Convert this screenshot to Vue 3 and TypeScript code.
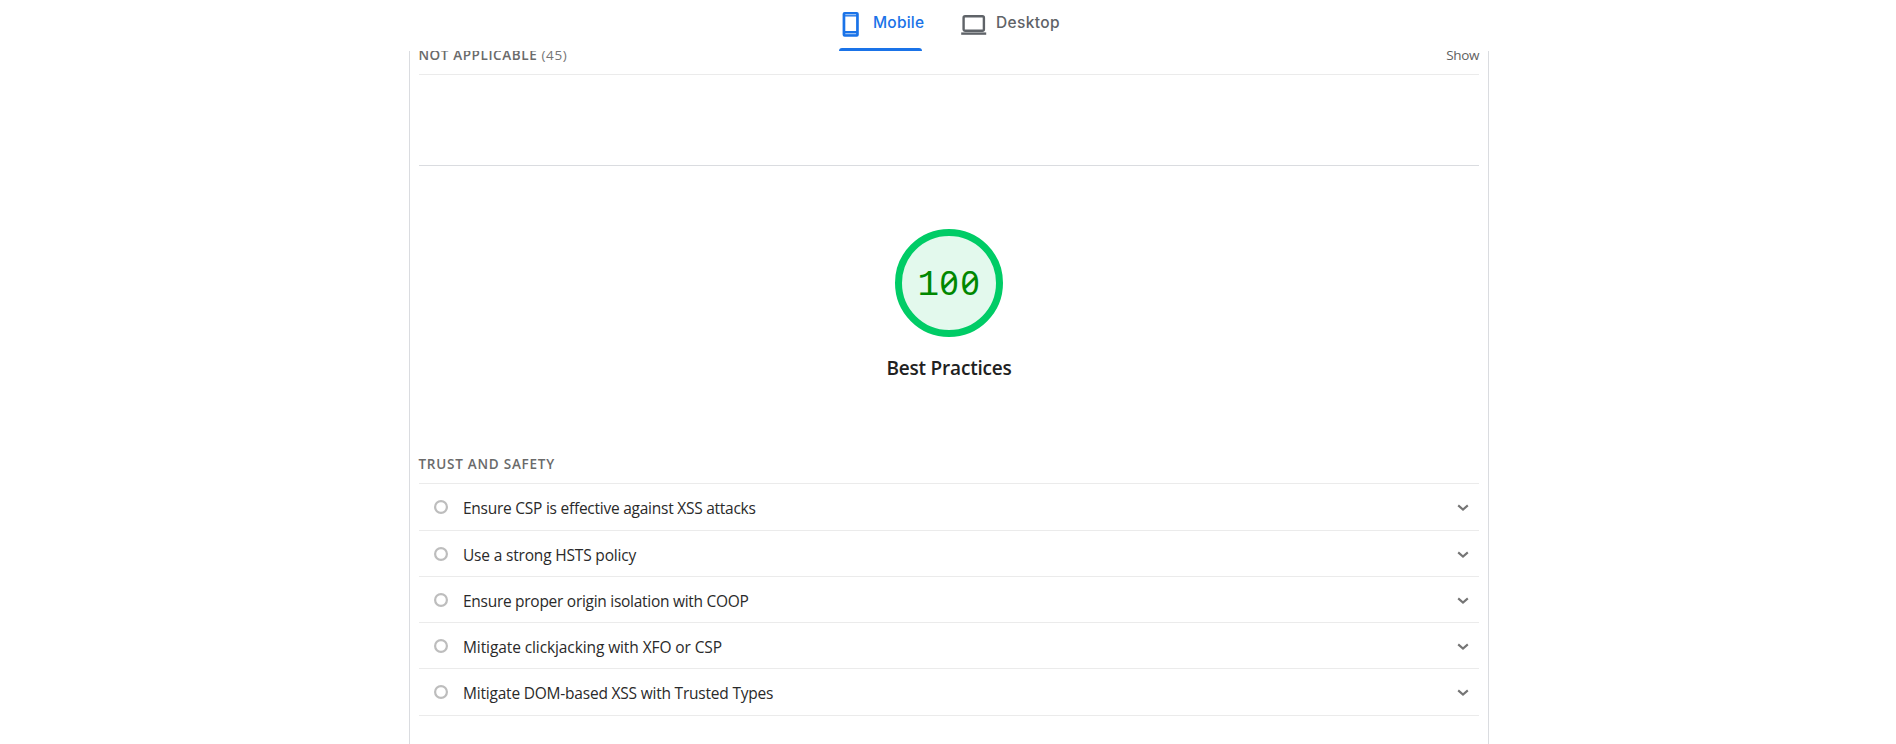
<script setup lang="ts">
interface Audit {
  title: string
}

const audits: Audit[] = [
  { title: 'Ensure CSP is effective against XSS attacks' },
  { title: 'Use a strong HSTS policy' },
  { title: 'Ensure proper origin isolation with COOP' },
  { title: 'Mitigate clickjacking with XFO or CSP' },
  { title: 'Mitigate DOM-based XSS with Trusted Types' },
]
</script>

<template>
  <div class="page">
    <nav class="tabs">
      <button class="tab active">
        <svg class="phone" width="24" height="26" viewBox="0 0 24 26">
          <path fill="currentColor" fill-rule="evenodd" d="M5.600 0h12.200a2 2 0 0 1 2 2v20.700a2 2 0 0 1-2 2H5.600a2 2 0 0 1-2-2V2a2 2 0 0 1 2-2zM6.300 4.600v14.400h10.800V4.600z" />
          <path stroke="#fff" stroke-opacity=".55" stroke-width="1.3" d="M6.300 2.700h10.800M6.300 21.700h10.800" />
        </svg>
        <span>Mobile</span>
      </button>
      <button class="tab desktop">
        <svg width="26" height="20" viewBox="0 0 26 20">
          <rect x="2.600" y="1.2" width="20.3" height="14.6" rx="1.5" fill="none" stroke="currentColor" stroke-width="2.4" />
          <path fill="currentColor" d="M.2 17.400h25v2.400H.2z" />
        </svg>
        <span>Desktop</span>
      </button>
    </nav>

    <main class="report">
      <header class="clump">
        <h3>NOT APPLICABLE <span class="count">(45)</span></h3>
        <span class="show">Show</span>
      </header>

      <section class="category">
        <div class="gauge">
          <span class="one">1</span><span class="zero">0</span><span class="zero">0</span>
        </div>
        <h2>Best Practices</h2>
      </section>

      <h3 class="group">TRUST AND SAFETY</h3>
      <ul class="audits">
        <li v-for="(audit, i) in audits" :key="audit.title" :class="['audit', `audit-${i + 1}`]">
          <svg class="dot" width="14" height="14" viewBox="0 0 14 14">
            <circle cx="7" cy="7" r="5.900" fill="none" stroke="#bdbdbd" stroke-width="2.200" />
          </svg>
          <span class="title">{{ audit.title }}</span>
          <svg class="chevron" width="12" height="8" viewBox="0 0 12 8">
            <path d="M1.2 1.4 6 5.600l4.800-4.200" fill="none" stroke="#757575" stroke-width="2.100" />
          </svg>
        </li>
      </ul>
    </main>
  </div>
</template>

<style>
body {
  background: #fff;
}
</style>

<style scoped>
.page {
  height: 744px;
  overflow: hidden;
  display: flex;
  flex-direction: column;
  box-sizing: border-box;
  padding-left: 409px;
  font-family: "Open Sans", "Noto Sans", sans-serif;
  color: #212121;
}

.tabs {
  width: 1080px;
  height: 51px;
  flex: none;
  display: flex;
  box-sizing: border-box;
  padding-left: 430px;
}

.tab {
  height: 51px;
  width: 83px;
  flex: none;
  display: flex;
  align-items: flex-start;
  box-sizing: border-box;
  padding: 0;
  border: 0;
  background: none;
  color: #5f6368;
  font: 500 15.5px/24px Inter, sans-serif;
  white-space: nowrap;
}

.tab span {
  margin-top: 11px;
  letter-spacing: 0.2px;
}

.tab.active {
  color: #1a73e8;
}

.tab.active::after {
  content: "";
  width: 83px;
  height: 3px;
  flex: none;
  order: -1;
  margin: 48px -83px 0 0;
  border-radius: 3px 3px 0 0;
  background: #1a73e8;
}

.phone {
  margin: 12px 10px 0 0;
  flex: none;
}

.tab.desktop {
  width: 100px;
  margin-left: 39px;
}

.tab.desktop span {
  letter-spacing: 0.35px;
}

.desktop svg {
  margin: 15px 9px 0 0;
  flex: none;
}

.report {
  width: 1080px;
  flex: 1;
  min-height: 0;
  box-sizing: border-box;
  border: solid #dadce0;
  border-width: 0 1px;
  padding: 0 9px;
  overflow: hidden;
}

h2,
h3 {
  margin: 0;
  font-weight: 600;
}

h3 {
  font-size: 13.5px;
  line-height: 20px;
  letter-spacing: 0.6px;
  color: #6a6a6a;
  white-space: nowrap;
  text-indent: -0.6px;
}

.clump {
  height: 23px;
  display: flex;
  justify-content: space-between;
  border-bottom: 1px solid #ebebeb;
}

.clump h3,
.show {
  margin-top: -6px;
}

.count {
  font-weight: 400;
  color: #757575;
}

.show {
  font-size: 13.5px;
  line-height: 20px;
  letter-spacing: -0.4px;
  color: #616161;
}

.category {
  height: 288px;
  margin-top: 90px;
  box-sizing: border-box;
  border-top: 1px solid #dadce0;
  padding-top: 63px;
  display: flex;
  flex-direction: column;
  align-items: center;
}

.gauge {
  width: 108px;
  height: 108px;
  flex: none;
  box-sizing: border-box;
  border: 7px solid #0c6;
  border-radius: 50%;
  background: #e3f9ed;
  color: #080;
  display: flex;
  justify-content: center;
  align-items: baseline;
  padding-top: 22px;
  font-size: 33.5px;
  line-height: 48px;
}

.gauge span {
  width: 21px;
  text-align: center;
}

.one {
  font-family: "Liberation Mono", monospace;
  font-size: 36px;
}

.zero {
  font-family: "Noto Sans", sans-serif;
  font-feature-settings: "zero" 1;
}

h2 {
  margin-top: 17px;
  font-size: 19px;
  line-height: 28px;
  letter-spacing: -0.2px;
}

.group {
  padding: 1px 0 9px;
  letter-spacing: 0.76px;
}

.audits {
  list-style: none;
  margin: 0;
  padding: 0;
  border-top: 1px solid #ebebeb;
}

.audit {
  height: 46px;
  box-sizing: border-box;
  border-bottom: 1px solid #ebebeb;
  display: flex;
  align-items: center;
  padding: 0 10px 0 15px;
}

.audit-1,
.audit-5 {
  height: 47px;
}

.title {
  margin-left: 15px;
  padding-top: 2px;
  font-size: 15.5px;
  line-height: 24px;
  letter-spacing: -0.25px;
  color: #2a2a2a;
  white-space: nowrap;
}

.audit-2 .title {
  letter-spacing: -0.18px;
}

.audit-3 .title {
  letter-spacing: -0.28px;
}

.audit-4 .title {
  letter-spacing: -0.1px;
}

.audit-5 .title {
  letter-spacing: -0.21px;
}

.chevron {
  margin-left: auto;
  margin-top: 2px;
}
</style>
